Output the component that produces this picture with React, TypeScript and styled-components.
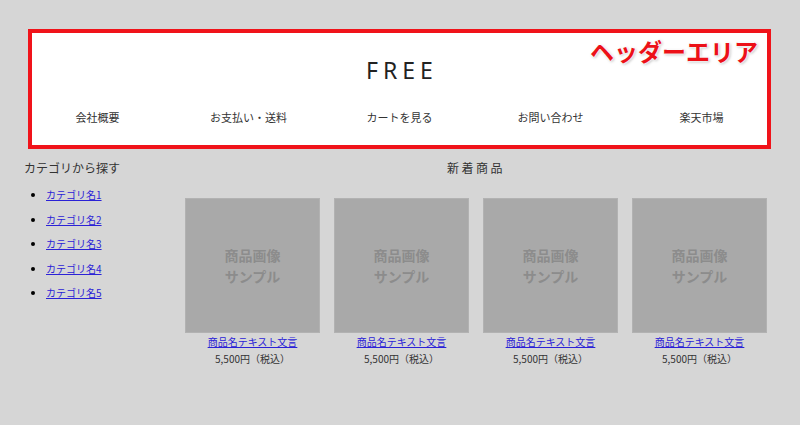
import React from 'react';
import styled, { createGlobalStyle } from 'styled-components';

const JP = `"Noto Sans CJK JP", "Noto Sans", sans-serif`;

const categories = ['カテゴリ名1', 'カテゴリ名2', 'カテゴリ名3', 'カテゴリ名4', 'カテゴリ名5'];
const navItems = ['会社概要', 'お支払い・送料', 'カートを見る', 'お問い合わせ', '楽天市場'];
const products = [1, 2, 3, 4];

export default function App() {
  return (
    <Page>
      <GlobalStyle />
      <Header>
        <Logo>FREE</Logo>
        <Nav>
          {navItems.map((item) => (
            <NavItem key={item}>{item}</NavItem>
          ))}
        </Nav>
        <AreaLabel>ヘッダーエリア</AreaLabel>
      </Header>
      <Main>
        <Sidebar>
          <SideTitle>カテゴリから探す</SideTitle>
          <CategoryList>
            {categories.map((name) => (
              <CategoryItem key={name}>
                <TextLink href="#">{name}</TextLink>
              </CategoryItem>
            ))}
          </CategoryList>
        </Sidebar>
        <Products>
          <SectionTitle>新着商品</SectionTitle>
          <Grid>
            {products.map((id) => (
              <Card key={id}>
                <Thumb>
                  <span>商品画像</span>
                  <span>サンプル</span>
                </Thumb>
                <ProductName href="#">商品名テキスト文言</ProductName>
                <Price>5,500円（税込）</Price>
              </Card>
            ))}
          </Grid>
        </Products>
      </Main>
    </Page>
  );
}

const GlobalStyle = createGlobalStyle`
  html, body {
    margin: 0;
    padding: 0;
    background: #d6d6d6;
    font-family: ${JP};
  }
`;

const Page = styled.div`
  width: 800px;
  height: 425px;
  padding-top: 29px;
  box-sizing: border-box;
  background: #d6d6d6;
`;

const Header = styled.header`
  position: relative;
  box-sizing: border-box;
  width: 743px;
  height: 120px;
  margin-left: 28px;
  border: 4px solid #f0131a;
  background: #fff;
  display: flex;
  flex-direction: column;
  align-items: center;
`;

const Logo = styled.div`
  margin-top: 21px;
  font-family: "Noto Sans", sans-serif;
  font-size: 23px;
  line-height: 32px;
  letter-spacing: 5px;
  padding-left: 5px;
  color: #222;
`;

const Nav = styled.nav`
  display: flex;
  align-self: stretch;
  margin: 23px -10px 0;
`;

const NavItem = styled.div`
  flex: 1;
  text-align: center;
  font-size: 11px;
  line-height: 16px;
  color: #333;
`;

const AreaLabel = styled.div`
  position: absolute;
  top: 2px;
  right: 9px;
  font-size: 24px;
  font-weight: 700;
  line-height: 32px;
  color: #ec1118;
  text-shadow:
    0 0 2px #fff, 0 0 2px #fff, 0 0 3px #fff,
    1px 1px 3px rgba(0, 0, 0, 0.35);
`;

const Main = styled.div`
  display: flex;
  padding-left: 24px;
  margin-top: 10px;
`;

const Sidebar = styled.aside`
  width: 161px;
  flex-shrink: 0;
`;

const SideTitle = styled.div`
  font-size: 12px;
  line-height: 18px;
  color: #333;
`;

const CategoryList = styled.ul`
  margin: 6px 0 0;
  padding-left: 22px;
`;

const CategoryItem = styled.li`
  font-size: 10px;
  line-height: 24.5px;
  color: #000;
`;

const TextLink = styled.a`
  color: #2b22d6;
  text-decoration: underline;
`;

const Products = styled.section`
  width: 582px;
  display: flex;
  flex-direction: column;
  align-items: center;
`;

const SectionTitle = styled.div`
  font-size: 12px;
  line-height: 18px;
  letter-spacing: 2.5px;
  color: #333;
`;

const Grid = styled.div`
  display: grid;
  grid-template-columns: repeat(4, 135px);
  gap: 14px;
  margin-top: 21px;
`;

const Card = styled.div`
  display: flex;
  flex-direction: column;
  align-items: center;
`;

const Thumb = styled.div`
  box-sizing: border-box;
  width: 135px;
  height: 135px;
  background: #a9a9a9;
  border: 1px solid #b2b2b2;
  display: flex;
  flex-direction: column;
  align-items: center;
  justify-content: center;
  gap: 2px;
  font-size: 14px;
  font-weight: 700;
  line-height: 19px;
  color: #8c8c8c;
`;

const ProductName = styled(TextLink)`
  margin-top: 1px;
  font-size: 10px;
  line-height: 15px;
`;

const Price = styled.div`
  margin-top: 2px;
  font-size: 10px;
  line-height: 15px;
  color: #333;
`;
